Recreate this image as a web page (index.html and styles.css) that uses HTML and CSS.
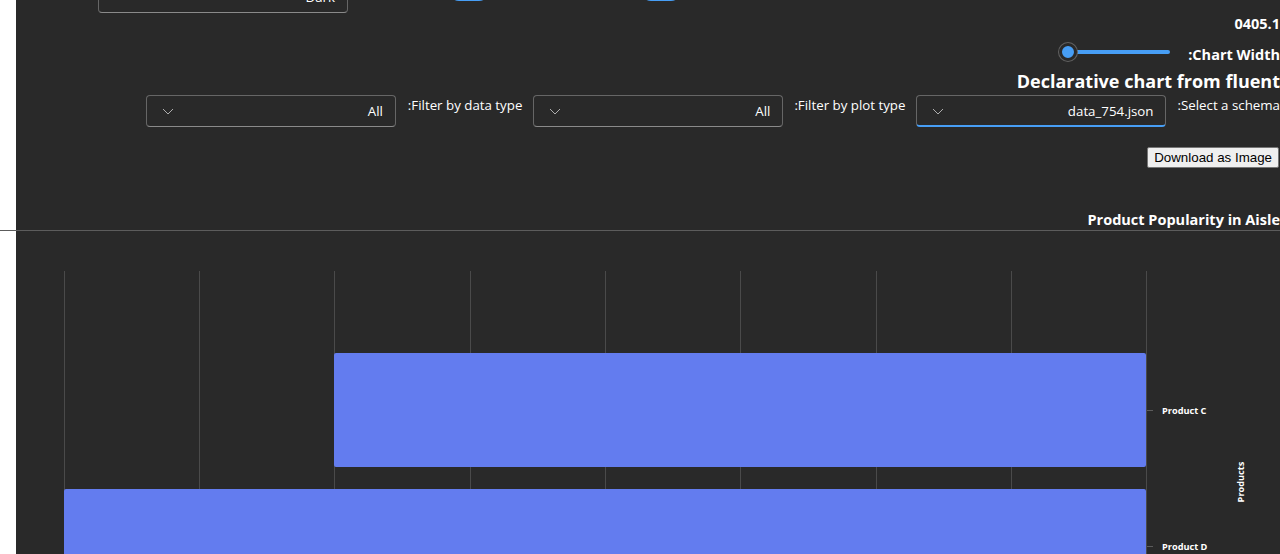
FILE: index.html
```html
<!DOCTYPE html>
<html lang="en">
<head>
<meta charset="utf-8">
<title>Declarative chart</title>
<link rel="stylesheet" href="styles.css">
</head>
<body>
<div class="page">
  <div class="top-row">
    <div class="dropdown dropdown-theme">
      <span class="chev"><svg width="12" height="12" viewBox="0 0 12 12"><path d="M1 4 L6 9 L11 4" fill="none" stroke="#adadad" stroke-width="1"/></svg></span>
      <span class="dd-value">Dark</span>
    </div>
    <div class="toggle toggle-one"><span class="knob"></span></div>
    <div class="toggle toggle-two"><span class="knob"></span></div>
    <span class="toggle-label">Enable_gradient, Toggle rounded_corners, Toggle category display by</span>
  </div>

  <div class="row row-end version">0405.1</div>

  <div class="row row-end slider-row">
    <div class="slider">
      <span class="slider-thumb"></span>
      <span class="slider-track"></span>
    </div>
    <span class="slider-label">:Chart Width</span>
  </div>

  <div class="row row-end page-title">Declarative chart from fluent</div>

  <div class="row row-end filter-row">
    <div class="dropdown">
      <span class="chev"><svg width="12" height="12" viewBox="0 0 12 12"><path d="M1 4 L6 9 L11 4" fill="none" stroke="#adadad" stroke-width="1"/></svg></span>
      <span class="dd-value">All</span>
    </div>
    <span class="filter-label">:Filter by data type</span>
    <div class="dropdown">
      <span class="chev"><svg width="12" height="12" viewBox="0 0 12 12"><path d="M1 4 L6 9 L11 4" fill="none" stroke="#adadad" stroke-width="1"/></svg></span>
      <span class="dd-value">All</span>
    </div>
    <span class="filter-label">:Filter by plot type</span>
    <div class="dropdown dropdown-focus">
      <span class="chev"><svg width="12" height="12" viewBox="0 0 12 12"><path d="M1 4 L6 9 L11 4" fill="none" stroke="#adadad" stroke-width="1"/></svg></span>
      <span class="dd-value">data_754.json</span>
    </div>
    <span class="filter-label">:Select a schema</span>
  </div>

  <div class="row row-end button-row">
    <button class="download-btn" type="button">Download as Image</button>
  </div>

  <div class="row row-end chart-title">Product Popularity in Aisle</div>
  <div class="divider"></div>

  <svg class="chart" width="1264" height="323" viewBox="0 0 1264 323">
    <g class="grid" stroke="#4a4a4a" stroke-width="1">
      <line x1="48.5" y1="40" x2="48.5" y2="323"/>
      <line x1="183.5" y1="40" x2="183.5" y2="323"/>
      <line x1="318.5" y1="40" x2="318.5" y2="323"/>
      <line x1="454.5" y1="40" x2="454.5" y2="323"/>
      <line x1="589.5" y1="40" x2="589.5" y2="323"/>
      <line x1="724.5" y1="40" x2="724.5" y2="323"/>
      <line x1="860.5" y1="40" x2="860.5" y2="323"/>
      <line x1="995.5" y1="40" x2="995.5" y2="323"/>
      <line x1="1130.5" y1="40" x2="1130.5" y2="323"/>
    </g>
    <rect x="318" y="122" width="812" height="114" rx="2" fill="#637cef"/>
    <rect x="48" y="258" width="1082" height="114" rx="2" fill="#637cef"/>
    <g stroke="#5c5c5c" stroke-width="1">
      <line x1="1131" y1="179.5" x2="1137" y2="179.5"/>
      <line x1="1131" y1="315.5" x2="1137" y2="315.5"/>
    </g>
    <g class="tick-label">
      <text x="1146" y="183">Product C</text>
      <text x="1146" y="319">Product D</text>
    </g>
    <text class="axis-title" transform="translate(1228 251) rotate(-90)" text-anchor="middle">Products</text>
  </svg>
</div>
</body>
</html>
```

FILE: styles.css
```css
* { box-sizing: border-box; }

html, body {
  margin: 0;
  padding: 0;
  background: #ffffff;
  overflow: hidden;
  height: 554px;
}

body {
  font-family: "Open Sans", "Noto Sans", sans-serif;
  color: #ffffff;
}

.page {
  margin-left: 16px;
  width: 1264px;
  height: 554px;
  background: #292929;
  display: flex;
  flex-direction: column;
}

.row {
  display: flex;
  align-items: flex-start;
  flex: none;
}

.row-end {
  justify-content: flex-end;
}

/* top row, mostly scrolled out of view */
.top-row {
  display: flex;
  align-items: flex-end;
  margin-top: -19px;
  height: 32px;
  padding-left: 82px;
  white-space: nowrap;
  overflow: hidden;
  flex: none;
}

.dropdown {
  position: relative;
  width: 250px;
  height: 32px;
  border: 1px solid #666666;
  border-bottom-color: #8a8a8a;
  border-radius: 4px;
  display: flex;
  align-items: center;
  justify-content: space-between;
  padding: 0 12px 0 15px;
  flex: none;
  font-size: 13.3px;
}

.dropdown-focus {
  border-bottom: 2px solid #479ef5;
}

.chev {
  display: flex;
  width: 12px;
  height: 12px;
}

.dd-value {
  color: #ffffff;
  line-height: 20px;
}

.toggle {
  width: 40px;
  height: 20px;
  border-radius: 10px;
  background: #479ef5;
  margin-bottom: 12px;
  flex: none;
}

.toggle-one { margin-left: 101px; }
.toggle-two { margin-left: 152px; }

.toggle-label {
  margin-left: 16px;
  font-size: 13px;
  line-height: 16px;
  margin-bottom: 17px;
}

.version {
  margin-top: 1px;
  font-weight: 700;
  font-size: 14.5px;
  line-height: 20px;
  height: 21px;
}

.slider-row {
  margin-top: 7px;
  height: 24px;
}

.slider {
  position: relative;
  width: 112px;
  height: 20px;
}

.slider-thumb {
  position: absolute;
  left: 1px;
  top: 1px;
  width: 18px;
  height: 18px;
  border-radius: 50%;
  background: #479ef5;
  border: 3px solid #292929;
  box-shadow: 0 0 0 1px #616161;
  z-index: 1;
}

.slider-track {
  position: absolute;
  left: 10px;
  right: 0;
  top: 8px;
  height: 4px;
  border-radius: 2px;
  background: #479ef5;
}

.slider-label {
  margin-left: 18px;
  margin-top: 3px;
  font-weight: 700;
  font-size: 14.5px;
  line-height: 20px;
  white-space: nowrap;
}

.page-title {
  margin-top: 2px;
  font-weight: 700;
  font-size: 18px;
  line-height: 26px;
  height: 27px;
  white-space: nowrap;
}

.filter-row {
  gap: 11px;
  height: 32px;
}

.filter-label {
  font-size: 13.3px;
  line-height: 20px;
  white-space: nowrap;
  margin-top: 0;
}

.filter-label:first-of-type {
  margin-left: 1px;
}

.button-row {
  margin-top: 20px;
  padding-right: 1px;
}

.download-btn {
  font-family: "Liberation Sans", Arial, sans-serif;
  font-size: 13.333px;
  color: #000000;
  background: #efefef;
  border: 1px solid #767676;
  border-radius: 2px;
  padding: 1px 6px;
  height: 21px;
  line-height: 16px;
}

.chart-title {
  margin-top: 42px;
  font-weight: 700;
  font-size: 14.5px;
  line-height: 20px;
  height: 20px;
  white-space: nowrap;
}

.divider {
  margin-left: -16px;
  width: 1280px;
  height: 1px;
  background: #5c5c5c;
  flex: none;
}

.chart {
  display: block;
  flex: none;
}

.tick-label text {
  font-family: "Open Sans", "Noto Sans", sans-serif;
  font-size: 9.2px;
  font-weight: 700;
  fill: #ffffff;
}

.axis-title {
  font-family: "Open Sans", "Noto Sans", sans-serif;
  font-size: 9.2px;
  font-weight: 700;
  fill: #ffffff;
}
```
